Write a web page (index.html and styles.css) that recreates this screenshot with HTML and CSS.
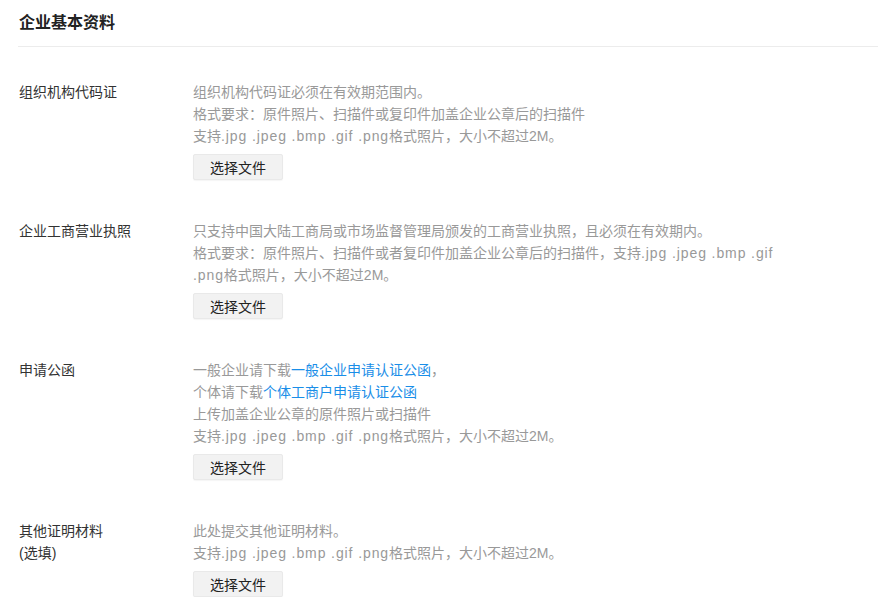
FILE: index.html
```html
<!DOCTYPE html>
<html lang="zh-CN">
<head>
    <meta charset="UTF-8">
    <title>企业基本资料</title>
    <link rel="stylesheet" href="styles.css">
</head>
<body>
    <div class="page">
        <!-- Section header -->
        <div class="section-header">
            <h2>企业基本资料</h2>
        </div>

        <!-- 组织机构代码证 -->
        <div class="form-row">
            <div class="form-label">组织机构代码证</div>
            <div class="form-field">
                <p>组织机构代码证必须在有效期范围内。</p>
                <p>格式要求：原件照片、扫描件或复印件加盖企业公章后的扫描件</p>
                <p>支持<span class="fmt">.jpg .jpeg .bmp .gif .png</span>格式照片，大小不超过2M。</p>
                <button class="file-btn">选择文件</button>
            </div>
        </div>

        <!-- 企业工商营业执照 -->
        <div class="form-row">
            <div class="form-label">企业工商营业执照</div>
            <div class="form-field wide">
                <p>只支持中国大陆工商局或市场监督管理局颁发的工商营业执照，且必须在有效期内。</p>
                <p>格式要求：原件照片、扫描件或者复印件加盖企业公章后的扫描件，支持<span class="fmt">.jpg .jpeg .bmp .gif .png</span>格式照片，大小不超过2M。</p>
                <button class="file-btn">选择文件</button>
            </div>
        </div>

        <!-- 申请公函 -->
        <div class="form-row">
            <div class="form-label">申请公函</div>
            <div class="form-field">
                <p>一般企业请下载<a href="#">一般企业申请认证公函</a>，</p>
                <p>个体请下载<a href="#">个体工商户申请认证公函</a></p>
                <p>上传加盖企业公章的原件照片或扫描件</p>
                <p>支持<span class="fmt">.jpg .jpeg .bmp .gif .png</span>格式照片，大小不超过2M。</p>
                <button class="file-btn">选择文件</button>
            </div>
        </div>

        <!-- 其他证明材料 -->
        <div class="form-row">
            <div class="form-label">其他证明材料<br>(选填)</div>
            <div class="form-field">
                <p>此处提交其他证明材料。</p>
                <p>支持<span class="fmt">.jpg .jpeg .bmp .gif .png</span>格式照片，大小不超过2M。</p>
                <button class="file-btn">选择文件</button>
            </div>
        </div>
    </div>
</body>
</html>
```

FILE: styles.css
```css
* {
    margin: 0;
    padding: 0;
    box-sizing: border-box;
}

body {
    font-family: 'Liberation Sans', 'Noto Sans CJK SC', sans-serif;
    font-size: 14px;
    color: #333;
    background: #fff;
}

.page {
    padding-left: 18px;
}

.section-header {
    padding: 11px 0 11px 1px;
    border-bottom: 1px solid #ececec;
}

.section-header h2 {
    font-size: 16px;
    line-height: 24px;
    font-weight: bold;
    color: #222;
}

.form-row {
    display: flex;
    margin-top: 40px;
}

.section-header + .form-row {
    margin-top: 34px;
}

.form-label {
    width: 175px;
    flex-shrink: 0;
    padding-left: 1px;
    line-height: 22px;
    color: #333;
}

.form-field {
    line-height: 22px;
    color: #999;
}

.form-field.wide {
    max-width: 590px;
}

/* file extensions render wider in the original font */
.fmt {
    letter-spacing: 0.9px;
}

.form-field a {
    color: #1a8ee8;
    text-decoration: none;
}

.file-btn {
    display: block;
    margin-top: 7px;
    width: 90px;
    height: 26px;
    font-family: inherit;
    font-size: 14px;
    color: #222;
    background: #f2f2f2;
    border: 1px solid #e9e9e9;
    border-radius: 2px;
    box-shadow: 0 1px 1px rgba(0, 0, 0, 0.04);
    cursor: pointer;
}
```
